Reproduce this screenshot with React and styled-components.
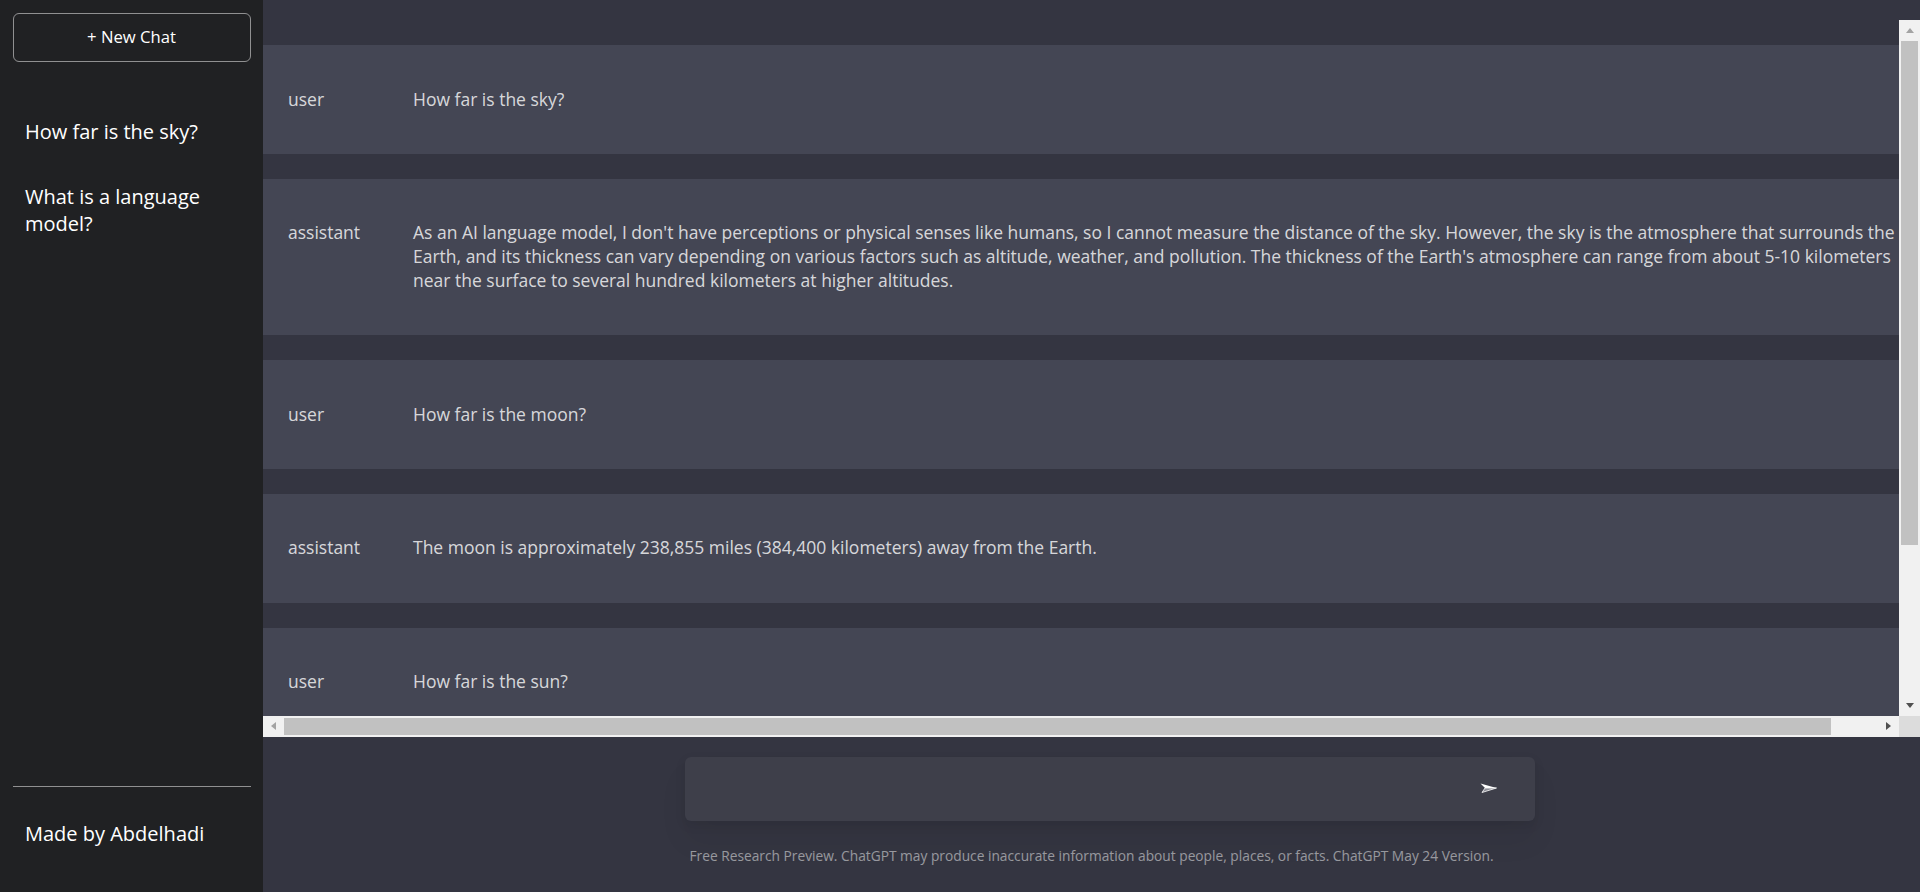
import React from "react";
import styled, { createGlobalStyle } from "styled-components";

const GlobalStyle = createGlobalStyle`
  body {
    margin: 0;
    padding: 0;
    background: #343541;
  }
  * {
    font-family: "Open Sans", "Liberation Sans", sans-serif;
    color: #fff;
  }
`;

const history = ["How far is the sky?", "What is a language model?"];

const chats = [
  { role: "user", content: "How far is the sky?" },
  {
    role: "assistant",
    content:
      "As an AI language model, I don't have perceptions or physical senses like humans, so I cannot measure the distance of the sky. However, the sky is the atmosphere that surrounds the Earth, and its thickness can vary depending on various factors such as altitude, weather, and pollution. The thickness of the Earth's atmosphere can range from about 5-10 kilometers near the surface to several hundred kilometers at higher altitudes.",
  },
  { role: "user", content: "How far is the moon?" },
  {
    role: "assistant",
    content:
      "The moon is approximately 238,855 miles (384,400 kilometers) away from the Earth.",
  },
  { role: "user", content: "How far is the sun?" },
  {
    role: "assistant",
    content:
      "The average distance between the Earth and the sun is about 93 million miles (149.6 million kilometers). This distance is known as an astronomical unit (AU) and is used as a standard unit of measurement for distances within our solar system, although it changes slightly during the year.",
  },
];

export default function App() {
  return (
    <>
      <GlobalStyle />
      <Layout>
        <SideBar>
          <NewChatButton>+ New Chat</NewChatButton>
          <History>
            {history.map((title, i) => (
              <HistoryItem key={i}>{title}</HistoryItem>
            ))}
          </History>
          <Nav>
            <p>Made by Abdelhadi</p>
          </Nav>
        </SideBar>
        <Main>
          <FeedFrame>
            <Feed>
              {chats.map((msg, i) => (
                <Message key={i}>
                  <Role>{msg.role}</Role>
                  <Text>{msg.content}</Text>
                </Message>
              ))}
            </Feed>
            <VScroll>
              <ScrollButton>
                <Arrow $dir="up" $color="#a3a3a3" />
              </ScrollButton>
              <Thumb $vertical $size={504} />
              <Track />
              <ScrollButton>
                <Arrow $dir="down" $color="#505050" />
              </ScrollButton>
            </VScroll>
            <HScroll>
              <ScrollButton>
                <Arrow $dir="left" $color="#a3a3a3" />
              </ScrollButton>
              <Thumb $size={1547} />
              <Track />
              <ScrollButton>
                <Arrow $dir="right" $color="#505050" />
              </ScrollButton>
            </HScroll>
            <Corner />
          </FeedFrame>
          <BottomSection>
            <InputWrap>
              <ChatInput />
              <Submit>
                <svg width="17" height="10" viewBox="0 0 17 10">
                  <path d="M0.5 0.5 L16.5 5 L5 5 Z" fill="#ffffff" />
                  <path
                    d="M5 5 L16.5 5 L2 9.5 Z"
                    fill="#8d8e97"
                    stroke="#ffffff"
                    strokeWidth="0.8"
                    strokeLinejoin="round"
                  />
                </svg>
              </Submit>
            </InputWrap>
            <Info>
              Free Research Preview. ChatGPT may produce inaccurate information
              about people, places, or facts. ChatGPT May 24 Version.
            </Info>
          </BottomSection>
        </Main>
      </Layout>
    </>
  );
}

const Layout = styled.section`
  display: flex;
  height: 100vh;
  background-color: #343541;
  overflow: hidden;
`;

const SideBar = styled.section`
  background-color: #202123;
  width: 263px;
  flex-shrink: 0;
  height: 100vh;
  display: flex;
  flex-direction: column;
  justify-content: space-between;
`;

const NewChatButton = styled.button`
  border: solid 1px rgba(255, 255, 255, 0.5);
  background-color: transparent;
  border-radius: 6px;
  padding: 12px;
  margin: 13px 12.5px 12.5px;
  font-size: 16.67px;
  line-height: 22.7px;
  cursor: pointer;
`;

const History = styled.ul`
  padding: 12.5px;
  margin: 12.5px;
  height: 100%;
`;

const HistoryItem = styled.li`
  list-style-type: none;
  padding: 18.75px 0;
  font-size: 20px;
  line-height: 27.2px;
  cursor: pointer;
`;

const Nav = styled.nav`
  border-top: solid 1px rgba(255, 255, 255, 0.5);
  padding: 12.5px;
  margin: 12.5px;

  p {
    margin: 20px 0;
    font-size: 20px;
    line-height: 27.2px;
  }
`;

const Main = styled.section`
  flex: 1;
  min-width: 0;
  height: 100vh;
  display: flex;
  flex-direction: column;
  align-items: center;
  text-align: center;
`;

const FeedFrame = styled.div`
  flex: 1;
  min-height: 0;
  width: 100%;
  margin: 20px 0;
  display: grid;
  grid-template-columns: minmax(0, 1fr) 21px;
  grid-template-rows: minmax(0, 1fr) 21px;
`;

const Feed = styled.ul`
  overflow: hidden;
  padding: 0;
  margin: 0;
`;

const Message = styled.li`
  display: flex;
  background-color: #444654;
  width: 100%;
  padding: 25px;
  margin: 25px 0;
  list-style: none;
`;

const Role = styled.p`
  min-width: 125px;
  margin: 17.5px 0;
  font-size: 17.5px;
  line-height: 23.8px;
  color: rgba(255, 255, 255, 0.8);
  text-align: left;
`;

const Text = styled(Role)`
  min-width: 0;
`;

const VScroll = styled.div`
  display: flex;
  flex-direction: column;
  background: #f1f1f1;
`;

const HScroll = styled.div`
  display: flex;
  background: #f1f1f1;
`;

const Corner = styled.div`
  background: #dcdcdc;
`;

const ScrollButton = styled.div`
  width: 21px;
  height: 21px;
  flex-shrink: 0;
  display: flex;
  align-items: center;
  justify-content: center;
`;

const Track = styled.div`
  flex: 1;
`;

const Thumb = styled.div`
  flex-shrink: 0;
  background: #c1c1c1;
  ${(p) =>
    p.$vertical
      ? `height: ${p.$size}px; margin: 0 2px;`
      : `width: ${p.$size}px; margin: 2px 0;`}
`;

const Arrow = styled.span`
  width: 0;
  height: 0;
  border-style: solid;
  ${({ $dir, $color }) =>
    ({
      up: `border-width: 0 4.5px 5px 4.5px; border-color: transparent transparent ${$color} transparent;`,
      down: `border-width: 5px 4.5px 0 4.5px; border-color: ${$color} transparent transparent transparent;`,
      left: `border-width: 4.5px 5px 4.5px 0; border-color: transparent ${$color} transparent transparent;`,
      right: `border-width: 4.5px 0 4.5px 5px; border-color: transparent transparent transparent ${$color};`,
    })[$dir]}
`;

const BottomSection = styled.div`
  width: 100%;
  display: flex;
  flex-direction: column;
  align-items: center;
`;

const InputWrap = styled.div`
  position: relative;
  width: 100%;
  max-width: 812.5px;
`;

const ChatInput = styled.input`
  display: block;
  border: none;
  outline: none;
  background-color: rgba(255, 255, 255, 0.05);
  width: 100%;
  font-size: 25px;
  line-height: 34px;
  height: 34px;
  padding: 15px 18.75px;
  border-radius: 6px;
  box-shadow: rgba(0, 0, 0, 0.05) 0 20px 30px, rgba(0, 0, 0, 0.08) 0 4px 12px;
`;

const Submit = styled.div`
  position: absolute;
  top: 26px;
  right: 1px;
  display: flex;
  cursor: pointer;
`;

const Info = styled.p`
  color: rgba(255, 255, 255, 0.5);
  font-size: 13.75px;
  line-height: 18.7px;
  padding: 12.5px;
  margin: 13.75px 0;
`;
